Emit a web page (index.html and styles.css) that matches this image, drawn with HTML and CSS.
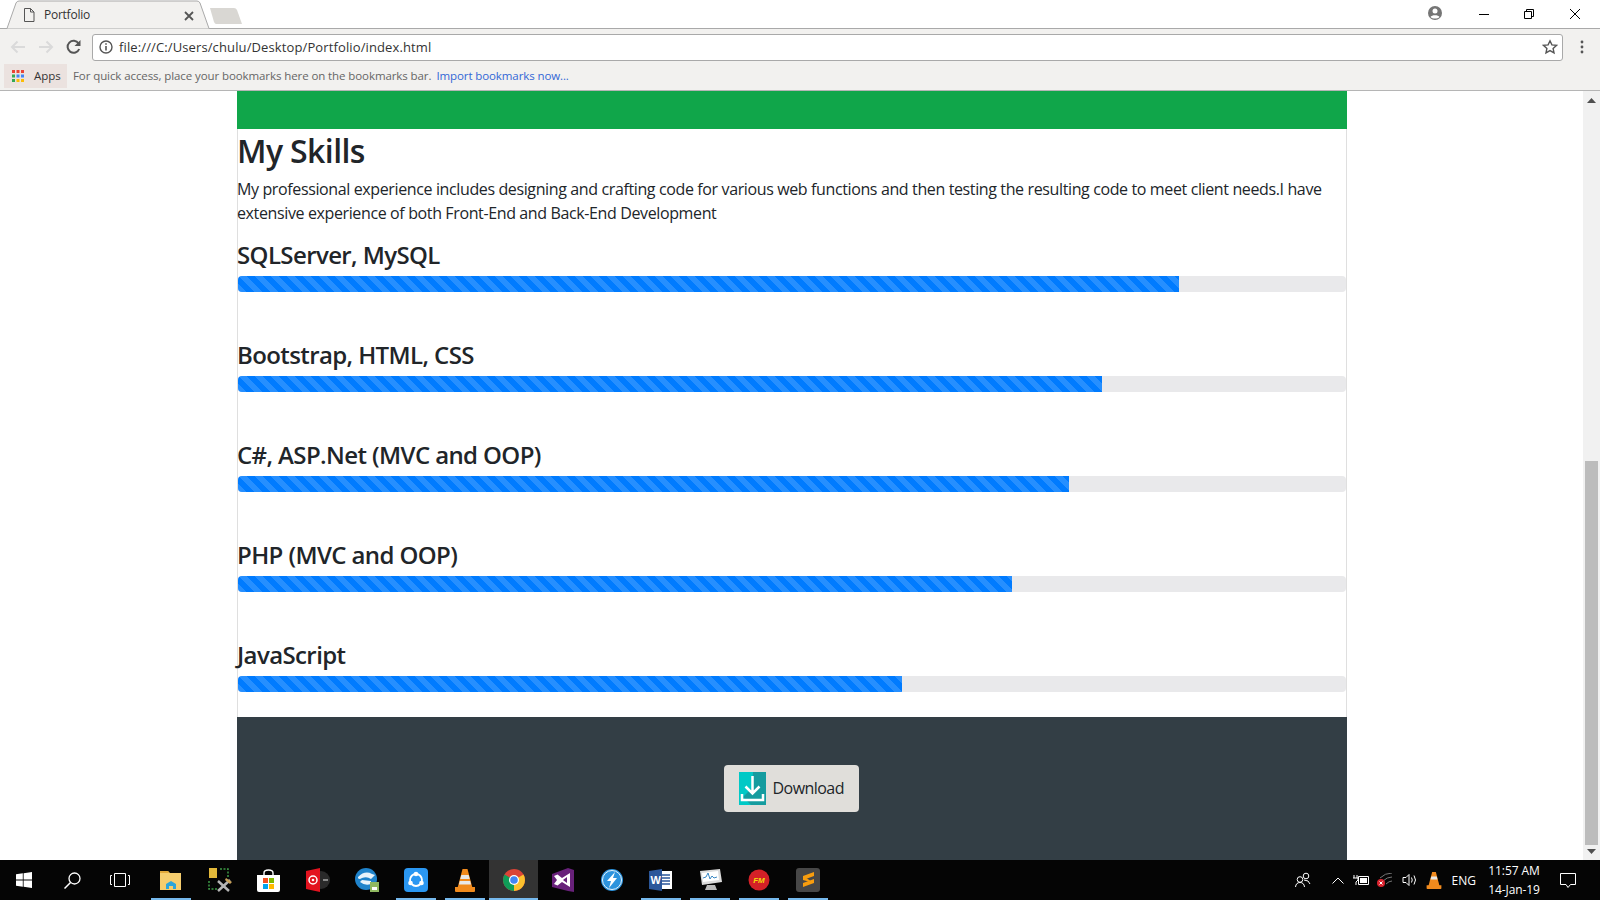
FILE: index.html
```html
<!DOCTYPE html>
<html lang="en">
<head>
  <meta charset="UTF-8">
  <title>Portfolio</title>
  <link rel="stylesheet" href="styles.css">
</head>
<body>
  <div class="tabstrip">
    <div class="tab">
      <svg class="tab-shape" width="206" height="29" viewBox="0 0 206 29"><path d="M0 28.500h2L11 3q1-2 3-2h178q2 0 3 2l9 25.500h2" fill="#f2f1ef" stroke="#a9a9a9"/></svg>
      <svg class="tab-doc" width="12" height="14" viewBox="0 0 12 14"><path d="M1.500.5h6l3.500 3.500v9.500h-9.500zM7.500.5v3.500h3.500" fill="none" stroke="#555"/></svg>
      <span class="tab-title">Portfolio</span>
      <svg class="tab-close" width="10" height="10" viewBox="0 0 10 10"><path d="M1 1l8 8M9 1l-8 8" stroke="#555" stroke-width="1.800"/></svg>
    </div>
    <svg class="newtab" width="34" height="18" viewBox="0 0 34 18"><path d="M1 1h24q2 0 3 2l5 14H7q-1 0-2-2z" fill="#d9d7d3"/></svg>
    <svg class="account" width="16" height="16" viewBox="0 0 16 16"><circle cx="8" cy="8" r="7" fill="#757575"/><circle cx="8" cy="6" r="2.500" fill="#fff"/><path d="M3.500 12c1-2.500 8-2.500 9 0-2 2-7 2-9 0z" fill="#fff"/></svg>
    <div class="winbtns">
      <svg width="10" height="10" viewBox="0 0 10 10"><path d="M0 5.500h10" stroke="#000"/></svg>
      <svg width="10" height="10" viewBox="0 0 10 10"><path d="M.5 2.500h7v7h-7zM2.500 2.500v-2h7v7h-2" fill="none" stroke="#000"/></svg>
      <svg width="12" height="12" viewBox="0 0 12 12"><path d="M1 1l10 10M11 1L1 11" stroke="#000"/></svg>
    </div>
  </div>

  <div class="toolbar">
    <svg class="nav-icon" width="16" height="14" viewBox="0 0 16 14"><path d="M15 7H2M7.500 1.500L2 7l5.500 5.500" fill="none" stroke="#dadada" stroke-width="2"/></svg>
    <svg class="nav-icon" width="16" height="14" viewBox="0 0 16 14"><path d="M1 7h13M8.500 1.500L14 7l-5.500 5.500" fill="none" stroke="#dadada" stroke-width="2"/></svg>
    <svg class="nav-icon" width="16" height="16" viewBox="0 0 16 16"><path d="M13.200 10a6 6 0 1 1-.6-5.500" fill="none" stroke="#555" stroke-width="2"/><path d="M14.500 1v6h-6z" fill="#555"/></svg>
    <div class="omnibox">
      <svg width="14" height="14" viewBox="0 0 14 14"><circle cx="7" cy="7" r="6" fill="none" stroke="#555" stroke-width="1.400"/><path d="M7 6v4.500M7 3.200v1.600" stroke="#555" stroke-width="1.600"/></svg>
      <span class="url">file:///C:/Users/chulu/Desktop/Portfolio/index.html</span>
      <svg class="star" width="16" height="16" viewBox="0 0 16 16"><path d="M8 1.800l1.900 4.100 4.500.5-3.300 3 .9 4.400L8 11.600l-4 2.200.9-4.400-3.300-3 4.500-.5z" fill="none" stroke="#555" stroke-width="1.400"/></svg>
    </div>
    <svg class="dots" width="4" height="14" viewBox="0 0 4 14"><circle cx="2" cy="2" r="1.400" fill="#555"/><circle cx="2" cy="7" r="1.400" fill="#555"/><circle cx="2" cy="12" r="1.400" fill="#555"/></svg>
  </div>

  <div class="bookmarks">
    <div class="apps">
      <svg width="12" height="12" viewBox="0 0 12 12">
        <path d="M0 0h3v3H0z" fill="#ea4335"/><path d="M4.500 0h3v3h-3z" fill="#ea4335"/><path d="M9 0h3v3H9z" fill="#ea4335"/>
        <path d="M0 4.500h3v3H0z" fill="#34a853"/><path d="M4.500 4.500h3v3h-3z" fill="#4285f4"/><path d="M9 4.500h3v3H9z" fill="#4285f4"/>
        <path d="M0 9h3v3H0z" fill="#34a853"/><path d="M4.500 9h3v3h-3z" fill="#fbbc05"/><path d="M9 9h3v3H9z" fill="#fbbc05"/>
      </svg>
      <span>Apps</span>
    </div>
    <span class="hint">For quick access, place your bookmarks here on the bookmarks bar.</span>
    <a class="import">Import bookmarks now...</a>
  </div>

  <div class="viewport">
    <div class="page">
      <div class="banner"></div>
      <div class="card">
        <h2>My Skills</h2>
        <p>My professional experience includes designing and crafting code for various web functions and then testing the resulting code to meet client needs.I have extensive experience of both Front-End and Back-End Development</p>
        <h4>SQLServer, MySQL</h4>
        <div class="progress"><div class="progress-bar" style="width:84.9%"></div></div>
        <h4>Bootstrap, HTML, CSS</h4>
        <div class="progress"><div class="progress-bar" style="width:78%"></div></div>
        <h4>C#, ASP.Net (MVC and OOP)</h4>
        <div class="progress"><div class="progress-bar" style="width:75%"></div></div>
        <h4>PHP (MVC and OOP)</h4>
        <div class="progress"><div class="progress-bar" style="width:69.9%"></div></div>
        <h4>JavaScript</h4>
        <div class="progress"><div class="progress-bar" style="width:59.9%"></div></div>
      </div>
      <div class="footer">
        <button class="download">
          <svg width="27" height="33" viewBox="0 0 27 33">
            <path d="M0 0h27v33H0z" fill="#00c9c6"/>
            <path d="M14 0h13v33H12L4 25l9-9z" fill="#159c9f"/>
            <path d="M13.500 4v17M6.500 14.500l7 7 7-7" fill="none" stroke="#fff" stroke-width="2.500"/>
            <path d="M3 22v6h21v-6" fill="none" stroke="#fff" stroke-width="2.500"/>
          </svg>
          <span>Download</span>
        </button>
      </div>
    </div>
    <div class="scrollbar">
      <svg width="9" height="5" viewBox="0 0 9 5"><path d="M4.500 0L9 5H0z" fill="#505050"/></svg>
      <div class="track"><div class="thumb"></div></div>
      <svg width="9" height="5" viewBox="0 0 9 5"><path d="M4.500 5L9 0H0z" fill="#505050"/></svg>
    </div>
  </div>

  <div class="taskbar">
    <div class="slot">
      <svg width="16" height="16" viewBox="0 0 16 16"><path d="M0 2.300l6.800-1v6.300H0zM7.600 1.200L16 0v7.600H7.600zM0 8.400h6.800v6.300l-6.800-1zM7.600 8.400H16V16l-8.400-1.200z" fill="#fff"/></svg>
    </div>
    <div class="slot">
      <svg width="17" height="17" viewBox="0 0 17 17"><circle cx="10.500" cy="6.500" r="5.500" fill="none" stroke="#fff" stroke-width="1.300"/><path d="M6.500 10.500L.5 16.500" stroke="#fff" stroke-width="1.500"/></svg>
    </div>
    <div class="slot">
      <svg width="20" height="14" viewBox="0 0 20 14"><path d="M4.500.5h11v13h-11zM2 2.500H.5v9H2M18 2.500h1.500v9H18" fill="none" stroke="#fff"/></svg>
    </div>
    <div class="slot app first on">
      <svg width="22" height="20" viewBox="0 0 22 20"><path d="M0 1h8l2 2h11v17H0z" fill="#f5cd6e"/><path d="M0 1h8l1 2H0z" fill="#e2a93a"/><path d="M6 19v-5l5-3 5 3v5h-3v-3H9v3z" fill="#2aa5dc"/></svg>
    </div>
    <div class="slot app">
      <svg width="24" height="26" viewBox="0 0 24 26"><path d="M1 1h8v10H1z" fill="#e3b93a"/><path d="M12 2h8v8M1 14v8h8" fill="none" stroke="#3d9a45" stroke-width="1.500" stroke-dasharray="2 1.500"/><path d="M10 14l11 10M22 13l-12 11" stroke="#b5b5b5" stroke-width="2.500"/><path d="M18 11l6 4-2 2-5-4z" fill="#c9a25a"/></svg>
    </div>
    <div class="slot app">
      <svg width="23" height="23" viewBox="0 0 23 23"><path d="M7 6V4q0-3 4.500-3T16 4v2" fill="none" stroke="#fff" stroke-width="1.400"/><path d="M0 6h23v15q0 2-2 2H2q-2 0-2-2z" fill="#fff"/><path d="M6 9h5v5H6z" fill="#f25022"/><path d="M12 9h5v5h-5z" fill="#7fba00"/><path d="M6 15h5v5H6z" fill="#00a4ef"/><path d="M12 15h5v5h-5z" fill="#ffb900"/></svg>
    </div>
    <div class="slot app">
      <svg width="24" height="24" viewBox="0 0 24 24"><circle cx="15" cy="12" r="9" fill="#2a2a2a"/><path d="M17 12h5" stroke="#aaa" stroke-width="1.500"/><path d="M0 3l14-3v24L0 21z" fill="#e3131f"/><circle cx="7" cy="12" r="4" fill="none" stroke="#fff" stroke-width="1.500"/><circle cx="7" cy="12" r="1.300" fill="#fff"/></svg>
    </div>
    <div class="slot app">
      <svg width="24" height="24" viewBox="0 0 24 24"><circle cx="11" cy="11" r="11" fill="#1f83cb"/><path d="M3 9q7-7 14-3l3 1-4 4q-4-3-9-1-3 2-4 0z" fill="#e8f3fb"/><path d="M5 14q5 4 11 2v-3l-9-1z" fill="#e8f3fb"/><path d="M15 14h9v10h-9z" fill="#8fb860"/><path d="M17 19h5v3h-5z" fill="#fff"/></svg>
    </div>
    <div class="slot app on">
      <svg width="24" height="24" viewBox="0 0 24 24"><rect width="24" height="24" rx="4" fill="#2a97f2"/><circle cx="12" cy="12" r="6" fill="none" stroke="#fff" stroke-width="1.800"/><circle cx="12" cy="6" r="2.300" fill="#fff"/><circle cx="6.500" cy="15" r="2.300" fill="#fff"/><circle cx="17.500" cy="15" r="2.300" fill="#fff"/></svg>
    </div>
    <div class="slot app on">
      <svg width="20" height="23" viewBox="0 0 20 23"><path d="M7.500 0h5l5 19H2.500z" fill="#f08a1d"/><path d="M6.300 6h7.400l1 4H5.300zM4.800 12h10.400l.8 3.500H4z" fill="#e8e8e8"/><path d="M0 18h20v4q0 1-1 1H1q-1 0-1-1z" fill="#f08a1d"/></svg>
    </div>
    <div class="slot app active">
      <svg width="22" height="22" viewBox="0 0 22 22"><circle cx="11" cy="11" r="11" fill="#db4437"/><path d="M11 11L20.500 5.500A11 11 0 0 1 11 22z" fill="#fbc02d"/><path d="M11 11v11A11 11 0 0 1 1.500 5.500z" fill="#0f9d58"/><circle cx="11" cy="11" r="5" fill="#fff"/><circle cx="11" cy="11" r="3.800" fill="#4285f4"/></svg>
    </div>
    <div class="slot app">
      <svg width="22" height="24" viewBox="0 0 22 24"><path d="M16 0l6 2v22l-6-1-16-4V6z" fill="#68217a"/><path d="M2 8l3.500-1.500L10 10l8-5v14l-8-5-4.500 3.500L2 16l3-4z" fill="#fff"/><path d="M11 12l4-3v6z" fill="#68217a"/></svg>
    </div>
    <div class="slot app">
      <svg width="22" height="22" viewBox="0 0 22 22"><circle cx="11" cy="11" r="11" fill="#2d93dd"/><circle cx="11" cy="11" r="9.500" fill="none" stroke="#e5f2fb"/><path d="M14 3L6 12h4l-2 7 8-10h-4z" fill="#fff"/></svg>
    </div>
    <div class="slot app on">
      <svg width="23" height="22" viewBox="0 0 23 22"><path d="M10 2h13v18H10z" fill="#fff"/><path d="M13 6h8M13 9h8M13 12h8M13 15h8" stroke="#2b579a" stroke-width="1.300"/><path d="M0 2l13-2v22L0 20z" fill="#2b579a"/><text class="word-w" x="1.500" y="15">W</text></svg>
    </div>
    <div class="slot app on">
      <svg width="24" height="22" viewBox="0 0 24 22"><path d="M2 2l20-2 2 13-20 3z" fill="#dcdcdc"/><path d="M4 4l16-2 1 9-16 2z" fill="#fff"/><path d="M5 9l3-1 2-4 2 6 2-3 2 2 3-1" fill="none" stroke="#3b88c3"/><path d="M9 16h8l2 5H7z" fill="#bbb"/></svg>
    </div>
    <div class="slot app on">
      <svg width="22" height="22" viewBox="0 0 22 22"><circle cx="11" cy="11" r="10.500" fill="#d42027"/><text class="fm" x="11" y="14">FM</text></svg>
    </div>
    <div class="slot app on">
      <svg width="24" height="24" viewBox="0 0 24 24"><rect width="24" height="24" rx="3" fill="#474747"/><path d="M18 4v4L7 12V8zM18 11v4L7 19v-4zM7 8l11 7-0 0-11-3z" fill="#f89d0e"/></svg>
    </div>

    <div class="tray">
      <svg class="t-people" width="16" height="16" viewBox="0 0 16 16"><circle cx="11" cy="4" r="2.800" fill="none" stroke="#fff"/><circle cx="5" cy="7.500" r="2.800" fill="none" stroke="#fff"/><path d="M.5 15q.5-4.500 4.500-4.500T9.500 15M9 8q5 0 6 4" fill="none" stroke="#fff"/></svg>
      <svg class="t-chev" width="12" height="7" viewBox="0 0 12 7"><path d="M.5 6.500L6 1l5.500 5.500" fill="none" stroke="#fff"/></svg>
      <svg class="t-batt" width="16" height="12" viewBox="0 0 16 12"><path d="M1 1v3M4 1v3M0 4h5v2l-2 2v3" fill="none" stroke="#fff"/><path d="M5.500 2.500h10v8h-10z" fill="none" stroke="#fff"/><path d="M7 4h7v5H7z" fill="#fff"/></svg>
      <svg class="t-wifi" width="16" height="14" viewBox="0 0 16 14"><path d="M4 5q5-5 12-5M7 8q4-4 9-4M10 11q3-3 6-3" fill="none" stroke="#777"/><circle cx="5" cy="10" r="4" fill="#d9232e"/><path d="M3.500 8.500l3 3M6.500 8.500l-3 3" stroke="#fff"/></svg>
      <svg class="t-vol" width="16" height="14" viewBox="0 0 16 14"><path d="M1 4.500h3L7 1.500v11l-3-3H1z" fill="none" stroke="#fff"/><path d="M9.500 4.500q1.500 2.500 0 5M12 2.500q3 4.500 0 9" fill="none" stroke="#fff"/></svg>
      <svg class="t-vlc" width="16" height="17" viewBox="0 0 20 23"><path d="M7.500 0h5l5 19H2.500z" fill="#f08a1d"/><path d="M6.300 6h7.400l1 4H5.300z" fill="#e8e8e8"/><path d="M0 18h20v4q0 1-1 1H1q-1 0-1-1z" fill="#f08a1d"/></svg>
      <span class="t-lang">ENG</span>
      <div class="t-clock"><span>11:57 AM</span><span>14-Jan-19</span></div>
      <svg class="t-note" width="16" height="15" viewBox="0 0 16 15"><path d="M.5.500h15v11h-5L8 14.500 6 11.500H.5z" fill="none" stroke="#fff"/></svg>
    </div>
  </div>
</body>
</html>
```

FILE: styles.css
```css
html, body {
  margin: 0;
  height: 100%;
}
body {
  display: flex;
  flex-direction: column;
  height: 100vh;
  overflow: hidden;
  font-family: "Open Sans", "Noto Sans", sans-serif;
  color: #212529;
  background: #fff;
}

/* window top */
.tabstrip {
  display: flex;
  align-items: flex-start;
  flex: 0 0 29px;
  background: linear-gradient(to bottom, #fff 28px, #a9a9a9 28px);
  position: relative;
}
.tab {
  position: relative;
  width: 206px;
  height: 29px;
  margin-left: 5px;
  display: flex;
  align-items: center;
}
.tab-shape {
  position: absolute;
  left: 0;
  top: 0;
}
.tab-doc {
  position: relative;
  margin: 0 0 0 18px;
}
.tab-title {
  position: relative;
  margin-left: 9px;
  font-size: 12px;
  color: #333;
  letter-spacing: -0.25px;
}
.tab-close {
  position: absolute;
  left: 179px;
  top: 11px;
}
.newtab {
  margin: 7px 0 0 -2px;
}
.account {
  margin: 5px 0 0 auto;
}
.winbtns {
  display: flex;
  align-items: center;
  gap: 35px;
  margin: 8px 19px 0 36px;
}

.toolbar {
  flex: 0 0 33px;
  box-sizing: border-box;
  display: flex;
  align-items: center;
  background: #f2f1ef;
  padding: 3px 0 0 10px;
}
.nav-icon {
  margin-right: 12px;
}
.nav-icon:nth-child(3) {
  margin-right: 10px;
}
.omnibox {
  display: flex;
  align-items: center;
  height: 27px;
  background: #fff;
  border: 1px solid #a9a9a9;
  border-radius: 3px;
  padding-left: 6px;
  box-sizing: border-box;
  width: 1471px;
}
.url {
  margin-left: 6px;
  font-size: 13px;
  color: #333;
  letter-spacing: 0.12px;
}
.star {
  margin-left: auto;
  margin-right: 4px;
}
.dots {
  margin-left: 17px;
}
.bookmarks {
  flex: 0 0 29px;
  box-sizing: border-box;
  display: flex;
  align-items: center;
  background: #f2f1ef;
  border-bottom: 1px solid #b5b5b5;
  font-size: 11.500px;
  padding-left: 4px;
}
.apps {
  display: flex;
  align-items: center;
  width: 63px;
  height: 24px;
  box-sizing: border-box;
  padding-left: 8px;
  background: #ebe2df;
  color: #333;
}
.apps span {
  margin-left: 10px;
  padding-bottom: 2px;
}
.hint {
  margin-left: 6px;
  padding-bottom: 2px;
  color: #666;
  letter-spacing: -0.09px;
}
.import {
  margin-left: 5px;
  padding-bottom: 2px;
  color: #3367d6;
  letter-spacing: -0.1px;
}

/* page */
.viewport {
  flex: 1;
  min-height: 0;
  display: flex;
}
.page {
  flex: 1;
  overflow: hidden;
  padding: 0 236px 0 237px;
}
.banner {
  height: 38px;
  background: #10a64a;
}
.card {
  border: solid #dfdfdf;
  border-width: 0 1px;
  height: 588px;
  box-sizing: border-box;
}
h2 {
  margin: 0 0 5px -1px;
  padding-top: 3px;
  font-size: 32px;
  font-weight: 600;
  line-height: 38.400px;
  letter-spacing: -0.6px;
}
p {
  margin: 0 0 14px -1px;
  padding-top: 2px;
  font-size: 16px;
  line-height: 24px;
  letter-spacing: -0.375px;
}
h4 {
  margin: 0 0 6px -1px;
  padding-top: 2px;
  font-size: 24px;
  font-weight: 600;
  line-height: 28.800px;
  letter-spacing: -0.6px;
}
.progress {
  height: 16px;
  background: #e9e9eb;
  border-radius: 4px;
  overflow: hidden;
  margin-bottom: 47.200px;
}
.progress-bar {
  height: 100%;
  background-color: #007bff;
  background-image: linear-gradient(45deg, rgba(255,255,255,.15) 25%, transparent 25%, transparent 50%, rgba(255,255,255,.15) 50%, rgba(255,255,255,.15) 75%, transparent 75%, transparent);
  background-size: 16px 16px;
}
.footer {
  background: #333e45;
  height: 200px;
  padding: 48px 2px 0 0;
  box-sizing: border-box;
  display: flex;
  justify-content: center;
  align-items: flex-start;
}
.download {
  display: flex;
  align-items: center;
  gap: 7px;
  width: 135px;
  height: 47px;
  padding: 0 0 0 15px;
  background: #e0deda;
  border: 0;
  border-radius: 4px;
  font-family: inherit;
  font-size: 16px;
  letter-spacing: -0.55px;
  color: #212529;
}
.download span {
  padding-bottom: 2px;
}

.scrollbar {
  width: 17px;
  background: #f1f1f1;
  display: flex;
  flex-direction: column;
  align-items: center;
  padding-top: 7px;
  box-sizing: border-box;
  padding-bottom: 6px;
}
.track {
  flex: 1;
  width: 100%;
  display: flex;
  flex-direction: column;
  justify-content: flex-end;
  padding-bottom: 4px;
}
.thumb {
  height: 384px;
  margin: 0 2px;
  background: #bcbcbc;
}

/* taskbar */
.taskbar {
  flex: 0 0 40px;
  display: flex;
  background: #050505;
  color: #fff;
}
.slot {
  width: 48px;
  height: 40px;
  display: flex;
  align-items: center;
  justify-content: center;
  position: relative;
  flex: none;
}
.slot.app {
  width: 49px;
}
.slot.first {
  margin-left: 2px;
}
.slot.on::after, .slot.active::after {
  content: "";
  position: absolute;
  left: 5px;
  right: 4px;
  bottom: 0;
  height: 2px;
  background: #76b9ed;
}
.slot.active {
  background: #333;
}
.slot.active::after {
  left: 0;
  right: 0;
}
.word-w {
  font-family: "Liberation Sans", sans-serif;
  font-size: 11px;
  font-weight: bold;
  fill: #fff;
}
.fm {
  font-family: "Liberation Sans", sans-serif;
  font-size: 8px;
  font-weight: bold;
  font-style: italic;
  fill: #f5d90a;
  text-anchor: middle;
}
.tray {
  margin-left: auto;
  display: flex;
  align-items: center;
}
.t-people { margin-right: 21px; }
.t-chev { margin-right: 9px; }
.t-batt { margin-right: 7px; }
.t-wifi { margin-right: 10px; }
.t-vol { margin-right: 8px; }
.t-vlc { margin-right: 10px; }
.t-lang {
  font-size: 12px;
  margin-right: 8px;
}
.t-clock {
  display: flex;
  flex-direction: column;
  align-items: center;
  font-size: 12px;
  line-height: 19px;
  letter-spacing: -0.1px;
  width: 60px;
  margin-right: 16px;
}
.t-note { margin-right: 24px; }
```
